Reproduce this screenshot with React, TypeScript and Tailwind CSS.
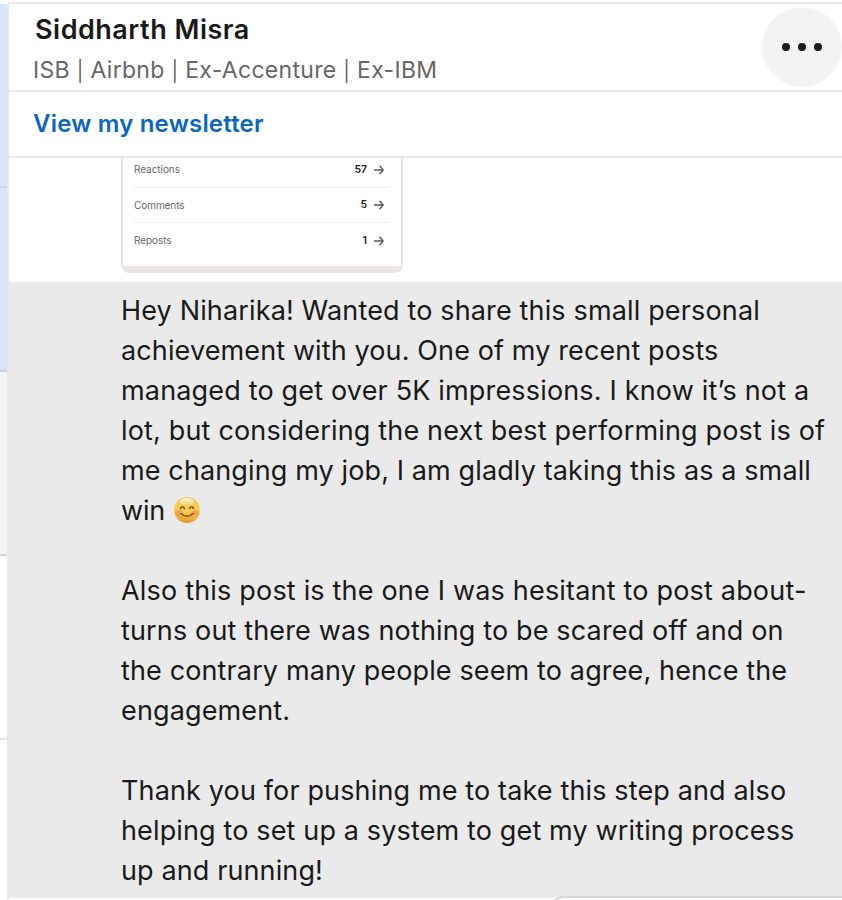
import React from 'react'

const stats = [
  { label: 'Reactions', value: 57 },
  { label: 'Comments', value: 5 },
  { label: 'Reposts', value: 1 },
]

const paragraphs = [
  [
    { text: 'Hey Niharika! Wanted to share this small personal', tracking: 'tracking-[0.15px]' },
    { text: 'achievement with you. One of my recent posts', tracking: 'tracking-[0.12px]' },
    { text: 'managed to get over 5K impressions. I know it’s not a', tracking: 'tracking-[0.17px]' },
    { text: 'lot, but considering the next best performing post is of', tracking: 'tracking-[0.17px]' },
    { text: 'me changing my job, I am gladly taking this as a small', tracking: 'tracking-[0.12px]' },
    { text: 'win', tracking: 'tracking-[-0.2px]', emoji: true },
  ],
  [
    { text: 'Also this post is the one I was hesitant to post about-', tracking: 'tracking-[0.19px]' },
    { text: 'turns out there was nothing to be scared off and on', tracking: 'tracking-[0.15px]' },
    { text: 'the contrary many people seem to agree, hence the', tracking: 'tracking-[0.13px]' },
    { text: 'engagement.', tracking: 'tracking-[0.14px]' },
  ],
  [
    { text: 'Thank you for pushing me to take this step and also', tracking: 'tracking-[0.14px]' },
    { text: 'helping to set up a system to get my writing process', tracking: 'tracking-[0.14px]' },
    { text: 'up and running!', tracking: 'tracking-[0.12px]' },
  ],
]

const SmileEmoji: React.FC = () => (
  <svg viewBox="0 0 28 28" className="w-7 h-7" aria-label="smiling face">
    <defs>
      <linearGradient id="face" x1="0" y1="0" x2="0" y2="1">
        <stop offset="0" stopColor="#f0c23f" />
        <stop offset="0.5" stopColor="#f8d25a" />
        <stop offset="1" stopColor="#e5942f" />
      </linearGradient>
      <linearGradient id="shine" x1="0" y1="0" x2="0" y2="1">
        <stop offset="0" stopColor="#fff" stopOpacity="0.9" />
        <stop offset="1" stopColor="#fff" stopOpacity="0" />
      </linearGradient>
    </defs>
    <circle cx="14" cy="14" r="13" fill="url(#face)" />
    <ellipse cx="14" cy="6" rx="7.5" ry="4" fill="url(#shine)" />
    <ellipse cx="6" cy="17" rx="4" ry="2.8" fill="#ee9440" opacity="0.7" />
    <ellipse cx="22" cy="17" rx="4" ry="2.8" fill="#ee9440" opacity="0.7" />
    <path d="M7.5 12.5q2-3.5 4 0M16.5 12.5q2-3.5 4 0M8 17.5q6 5.5 12 0" fill="none" stroke="#84521b" strokeWidth="1.6" strokeLinecap="round" />
  </svg>
)

const ArrowIcon: React.FC = () => (
  <svg viewBox="0 0 12 10" className="w-3 h-2.5" fill="none" stroke="#555" strokeWidth="1.3">
    <path d="M1 5h9M6.3 1.5h1L10.2 5 7.3 8.5h-1" />
  </svg>
)

const Bar: React.FC = () => <span className="text-[20px] leading-none">|</span>

const Sidebar: React.FC = () => (
  <aside className="flex flex-col w-[7px] shrink-0 pt-1">
    <div className="h-[184px] bg-[#d8e7fb] border-b-2 border-[#ccd2da]" />
    <div className="h-[184px] bg-[#d8e7fb] border-b-2 border-[#cfd1d4]" />
    <div className="h-[184px] bg-[#f2f4f6] border-b-2 border-[#d3d3d3]" />
    <div className="h-[184px] bg-white border-b-2 border-[#e3e3e3]" />
  </aside>
)

const Header: React.FC = () => (
  <header className="flex justify-between h-[88px] border-b-2 border-[#e8e8e8]">
    <div className="pl-6">
      <h1 className="pl-0.5 pt-2 text-[27px] leading-[36px] tracking-[0.5px] font-semibold text-[#191919] whitespace-nowrap">Siddharth Misra</h1>
      <p className="pt-1 text-[23px] leading-[36px] tracking-[0.31px] text-[#666] whitespace-nowrap">
        ISB <Bar /> Airbnb <Bar /> Ex-Accenture <Bar /> Ex-IBM
      </p>
    </div>
    <button className="flex items-center justify-center gap-2 w-20 h-20 mt-[3px] rounded-full bg-[#f3f3f3]">
      <span className="w-2 h-2 rounded-full bg-[#191919]" />
      <span className="w-2 h-2 rounded-full bg-[#191919]" />
      <span className="w-2 h-2 rounded-full bg-[#191919]" />
    </button>
  </header>
)

const StatsCard: React.FC = () => (
  <div className="w-[282px] h-[115px] ml-28 px-[11px] border-x-2 border-b-[7px] border-[#e8e7e6] rounded-b-lg">
    {stats.map((stat) => (
      <div
        key={stat.label}
        className="flex items-center h-[35px] first:h-[30px] first:pb-[6px] border-b border-[#ececec] last:border-0 text-[10px] tracking-[-0.06px] text-[#666]"
      >
        <span>{stat.label}</span>
        <span className="ml-auto mr-1.5 text-[10.5px] font-semibold text-[#222]">{stat.value}</span>
        <span className="mr-[5px]"><ArrowIcon /></span>
      </div>
    ))}
  </div>
)

const Message: React.FC = () => (
  <section className="flex flex-col gap-10 h-[616px] pl-28 pt-[9px] bg-[#eaeaea] text-[27px] leading-[40px] text-[#191919]">
    {paragraphs.map((lines, i) => (
      <p key={i}>
        {lines.map((line) => (
          <span key={line.text} className="flex items-center h-10 whitespace-nowrap">
            <span className={line.tracking}>{line.text}</span>
            {'emoji' in line && <span className="ml-2 pb-0.5"><SmileEmoji /></span>}
          </span>
        ))}
      </p>
    ))}
  </section>
)

export default function App() {
  return (
    <div className="flex w-[842px] h-[900px] overflow-hidden bg-white font-['Inter',sans-serif]">
      <Sidebar />
      <main className="relative flex-1 min-w-0 pt-0.5">
        <div className="border-t-2 border-l-2 border-[#e8e8e8]">
          <Header />
          <div className="flex items-center h-[66px] pl-6 border-b-2 border-[#e8e8e8]">
            <a href="#" className="text-[24px] leading-9 tracking-[0.2px] font-semibold text-[#0a66c2] whitespace-nowrap">View my newsletter</a>
          </div>
          <div className="h-[124px]">
            <StatsCard />
          </div>
          <Message />
          <div className="h-2" />
        </div>
        {/* top edge of the hover toolbar, overlapping the message */}
        <div className="absolute top-[896px] left-[541px] right-[-20px] h-10 border-2 border-[#d8d8d8] rounded-2xl bg-white" />
      </main>
    </div>
  )
}
